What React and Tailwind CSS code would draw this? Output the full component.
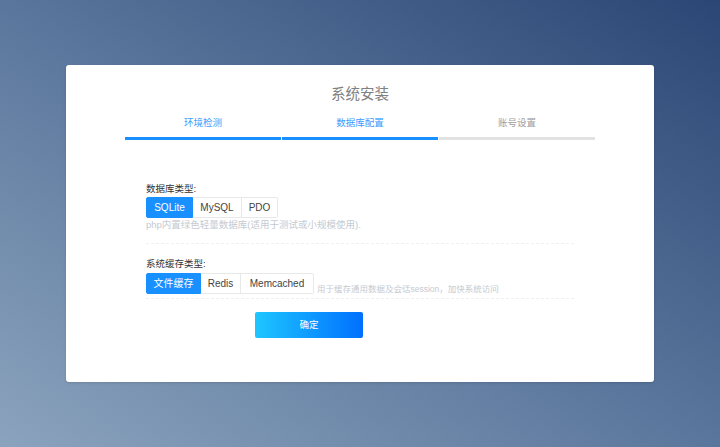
import React from "react";

const font = { fontFamily: '"Liberation Sans", "Noto Sans CJK SC", sans-serif' };

function Seg({ items, active, widths }) {
  return (
    <div className="flex h-[21px]">
      {items.map((t, i) => (
        <div
          key={t}
          className={
            "flex items-center justify-center text-[10px] border " +
            (i === active
              ? "bg-[#1890ff] border-[#1890ff] text-white"
              : "bg-white border-[#e8e8e8] text-[#444]") +
            (i > 0 ? " border-l-0" : "") +
            (i === 0 ? " rounded-l-[2px]" : "") +
            (i === items.length - 1 ? " rounded-r-[2px]" : "")
          }
          style={{ width: widths[i] }}
        >
          {t}
        </div>
      ))}
    </div>
  );
}

export default function App() {
  return (
    <div
      className="w-full h-screen flex items-center justify-center bg-[linear-gradient(to_top_right,#8ba3bd,#5a769c_50%,#2b4674)]"
      style={font}
    >
      <div className="w-[588px] h-[317px] bg-white rounded-[3px] shadow-sm flex flex-col">
        <div className="pt-[19px] text-center text-[14.5px] leading-[20px] text-[#808080]">
          系统安装
        </div>
        <div className="mt-[12px] px-[59px] grid grid-cols-3 gap-x-[1px]">
          <div className="text-center text-[9.5px] leading-[14px] text-[#3d9bff]">环境检测</div>
          <div className="text-center text-[9.5px] leading-[14px] text-[#3d9bff]">数据库配置</div>
          <div className="text-center text-[9.5px] leading-[14px] text-[#a0a0a0]">账号设置</div>
          <div className="mt-[7px] h-[3px] bg-[#1890ff]"></div>
          <div className="mt-[7px] h-[3px] bg-[#1890ff]"></div>
          <div className="mt-[7px] h-[3px] bg-[#e2e2e2]"></div>
        </div>

        <div className="mx-[80px] mt-[42px] flex flex-col">
          <div className="pb-[11px] border-b border-dashed border-[#f0f0f0]">
            <div className="text-[9.5px] leading-[14px] text-[#333]">数据库类型:</div>
            <div className="mt-[1px]">
              <Seg items={["SQLite", "MySQL", "PDO"]} active={0} widths={[47, 49, 36]} />
            </div>
            <div className="text-[9.5px] leading-[14px] text-[#c5cad1]">
              php内置绿色轻量数据库(适用于测试或小规模使用).
            </div>
          </div>

          <div className="mt-[13px] pb-[4px] border-b border-dashed border-[#f0f0f0]">
            <div className="text-[9.5px] leading-[14px] text-[#333]">系统缓存类型:</div>
            <div className="mt-[2px] flex items-end">
              <Seg items={["文件缓存", "Redis", "Memcached"]} active={0} widths={[55, 40, 73]} />
              <div className="ml-[3px] text-[8.5px] leading-[10px] text-[#c5cad1]">
                用于缓存通用数据及会话session，加快系统访问
              </div>
            </div>
          </div>

          <div className="mt-[12px] ml-[109px]">
            <button className="w-[108px] h-[26px] rounded-[2px] bg-[linear-gradient(to_right,#1ec6ff,#0070ff)] text-white text-[9.5px]">
              确定
            </button>
          </div>
        </div>
      </div>
    </div>
  );
}
